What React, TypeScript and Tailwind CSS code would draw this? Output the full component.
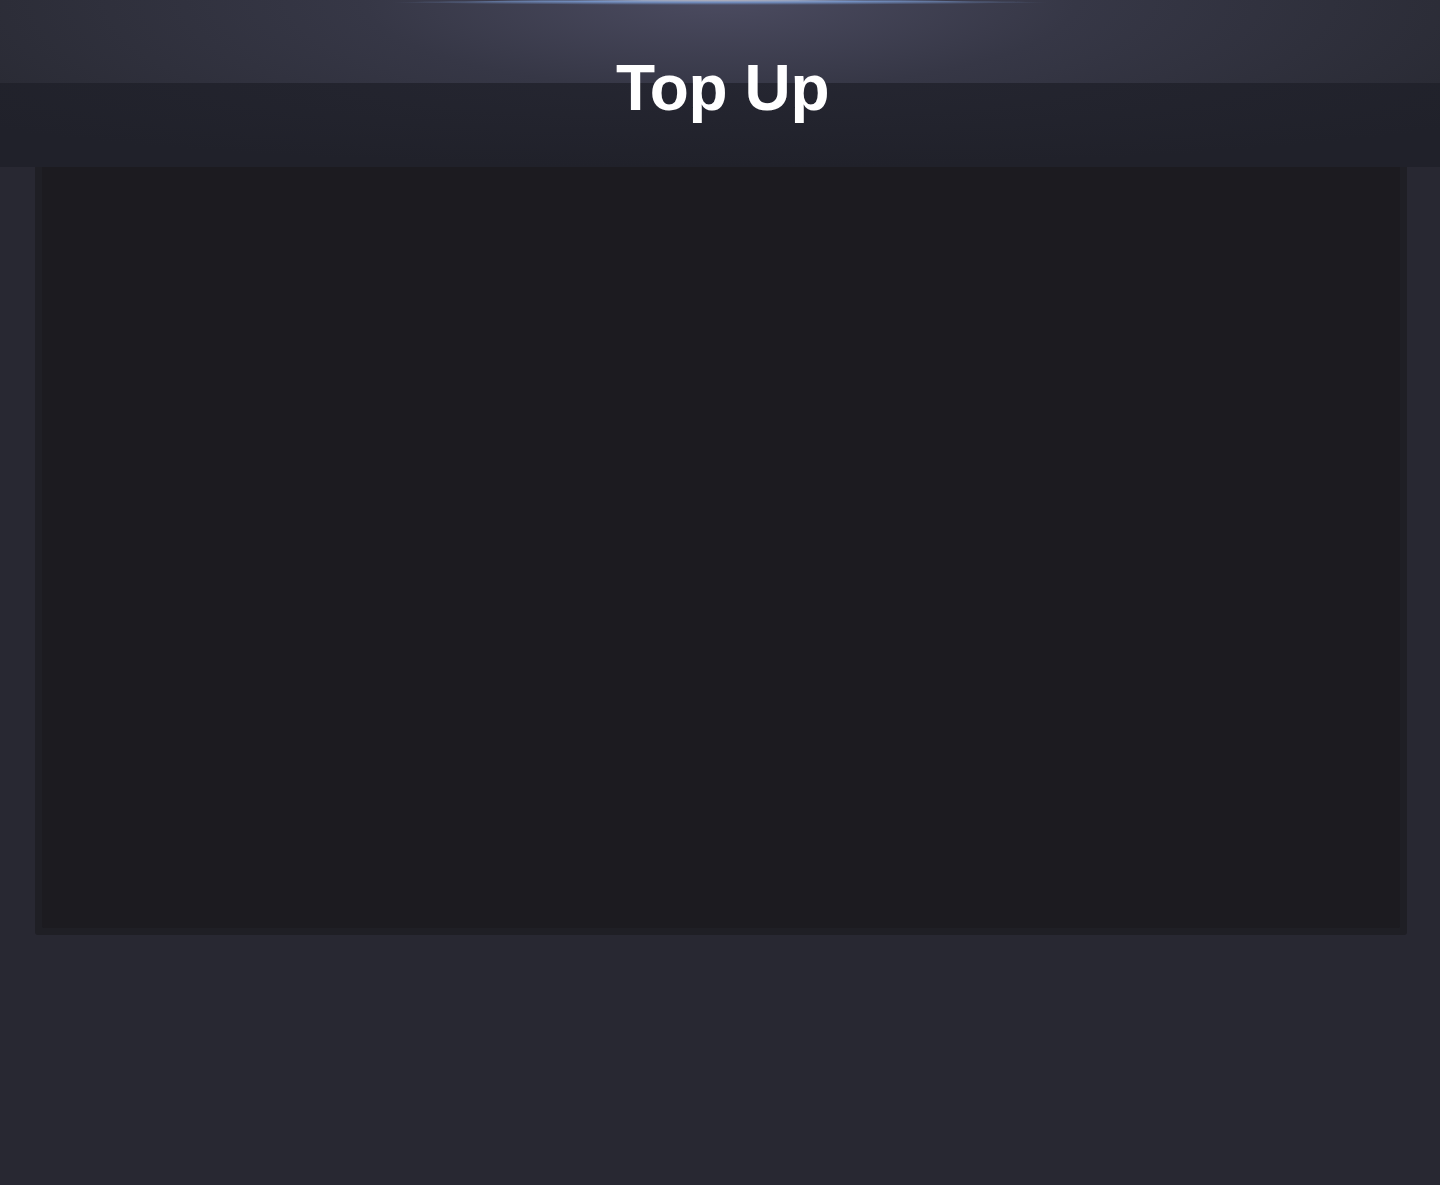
export default function App() {
  return (
    <div className="min-h-[1185px] bg-[#282832] font-['Liberation_Sans',Arial,sans-serif]">
      <header className="relative h-[167px] overflow-hidden bg-[#21222b]">
        <div className="absolute inset-0 bg-[radial-gradient(ellipse_55%_120%_at_50%_0%,#4b4b60_0%,#363746_45%,#2a2b35_100%)]" />
        <div className="absolute inset-x-0 bottom-0 h-[84px] bg-[radial-gradient(ellipse_60%_100%_at_50%_0%,#252631_0%,#20212a_100%)]" />
        <div className="absolute left-1/2 top-0 h-[10px] w-[760px] -translate-x-1/2 rounded-[50%] bg-[radial-gradient(ellipse_50%_50%_at_50%_0%,#b9b3b8_0%,#7390c2_45%,transparent_100%)]" />
        <div className="relative flex h-full items-center justify-center pl-[5px] pt-[8px]">
          <h1 className="text-[64px] font-bold leading-none tracking-[-0.4px] text-white">Top Up</h1>
        </div>
      </header>
      <main className="px-[35px] pr-[33px]">
        <div className="rounded-b-[3px] bg-[#1f1f25] px-[7px] pb-[7px]">
          <div className="h-[761px] rounded-b-[2px] bg-[#1c1b20]" />
        </div>
      </main>
    </div>
  );
}
